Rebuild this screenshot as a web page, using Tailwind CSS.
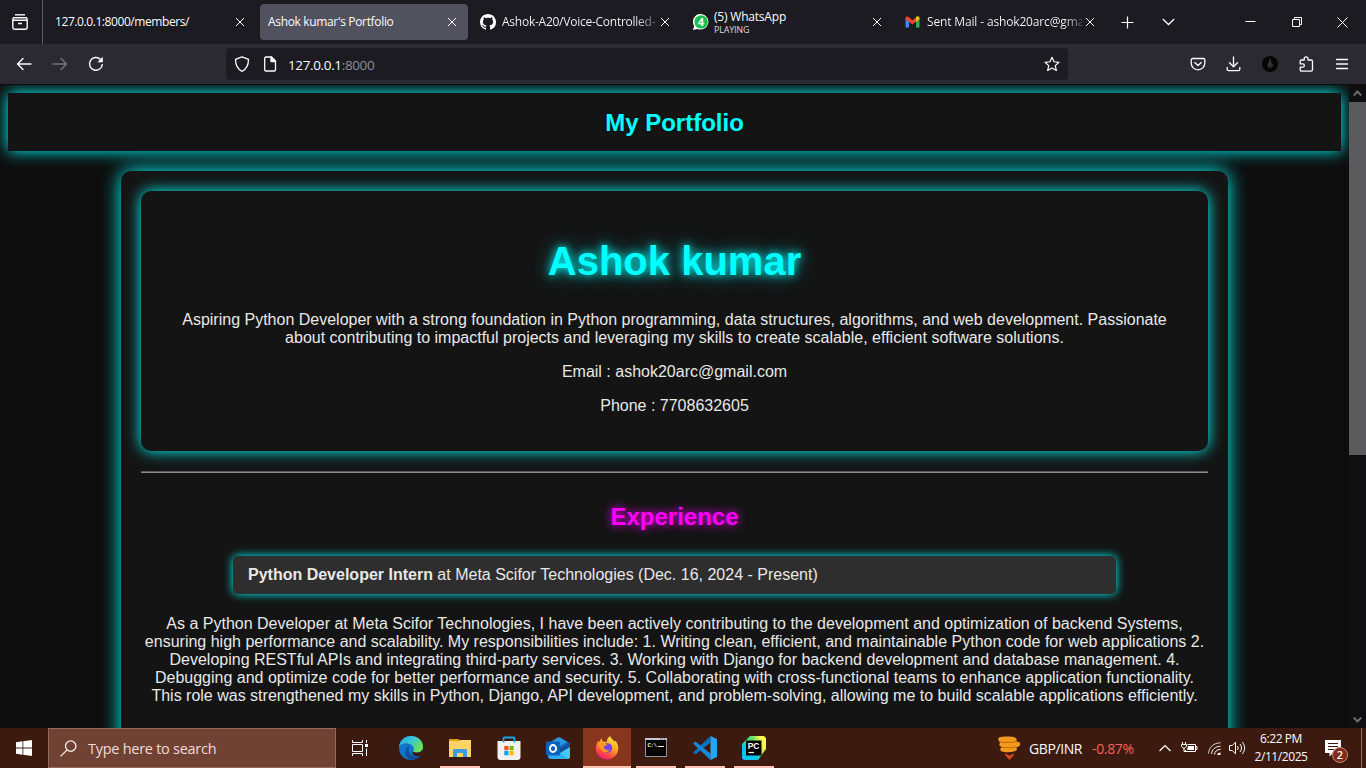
<!DOCTYPE html>
<html lang="en">
<head>
<meta charset="utf-8">
<title>Ashok kumar's Portfolio</title>
<script src="https://cdn.jsdelivr.net/npm/@tailwindcss/browser@4"></script>
</head>
<body class="w-[1366px] h-[768px] overflow-hidden flex flex-col bg-[#0d0d0d] font-['Open_Sans',sans-serif] text-[#fbfbfe]">

<!-- Tab strip -->
<div class="h-11 shrink-0 flex bg-[#1c1b22] text-[12px] leading-4">
  <div class="w-[43px] shrink-0 border-r border-[#5b5a60] flex items-center pl-3">
    <svg width="16" height="16" viewBox="0 0 16 16" fill="none" stroke="#fbfbfe" stroke-width="1.4"><path d="M3 .8h10"/><path d="M1 3.700h14" stroke-width="1.2"/><path d="M.8 6.200h14.400v7c0 1.200-.8 2-2 2H2.800c-1.200 0-2-.8-2-2V5.500c0-1.200.8-1.900 2-1.900h10.400c1.200 0 2 .7 2 1.900v1"/><path d="M6 9.500h4" stroke-width="1.5"/></svg>
  </div>
  <div class="w-[215px] shrink-0 flex items-center pl-3">
    <span class="w-[180px] whitespace-nowrap tracking-[-0.42px]">127.0.0.1:8000/members/</span>
    <svg width="10" height="10" viewBox="0 0 10 10" stroke="#fbfbfe" stroke-width="1"><path d="M1 1l8 8M9 1l-8 8"/></svg>
  </div>
  <div class="mt-1 h-9 w-[208px] ml-0.5 shrink-0 rounded bg-[#52525e] flex items-center pl-2">
    <span class="w-[179px] whitespace-nowrap tracking-[-0.34px]">Ashok kumar's Portfolio</span>
    <svg width="10" height="10" viewBox="0 0 10 10" stroke="#fbfbfe" stroke-width="1"><path d="M1 1l8 8M9 1l-8 8"/></svg>
  </div>
  <div class="w-[213px] shrink-0 flex items-center pl-3">
    <svg width="16" height="16" viewBox="0 0 16 16" fill="#fff"><path d="M8 0C3.58 0 0 3.58 0 8c0 3.54 2.29 6.53 5.47 7.59.4.07.55-.17.55-.38 0-.19-.01-.82-.01-1.49-2.01.37-2.53-.49-2.69-.94-.09-.23-.48-.94-.82-1.13-.28-.15-.68-.52-.01-.53.63-.01 1.08.58 1.23.82.72 1.21 1.87.87 2.33.66.07-.52.28-.87.51-1.07-1.78-.2-3.64-.89-3.64-3.95 0-.87.31-1.59.82-2.15-.08-.2-.36-1.02.08-2.12 0 0 .67-.21 2.2.82.64-.18 1.32-.27 2-.27s1.36.09 2 .27c1.53-1.04 2.2-.82 2.2-.82.44 1.1.16 1.92.08 2.12.51.56.82 1.27.82 2.15 0 3.07-1.87 3.75-3.65 3.95.29.25.54.73.54 1.48 0 1.07-.01 1.93-.01 2.2 0 .21.15.46.55.38A8.01 8.01 0 0 0 16 8c0-4.42-3.58-8-8-8z"/></svg>
    <span class="ml-[6px] w-[156px] mr-[2px] whitespace-nowrap tracking-[-0.25px] bg-linear-to-r from-[#fbfbfe] from-85% to-[#fbfbfe]/20 bg-clip-text text-transparent">Ashok-A20/Voice-Controlled-</span>
    <svg width="10" height="10" viewBox="0 0 10 10" stroke="#fbfbfe" stroke-width="1"><path d="M1 1l8 8M9 1l-8 8"/></svg>
  </div>
  <div class="w-[212px] shrink-0 flex items-center pl-3">
    <svg width="16" height="16" viewBox="0 0 16 16"><path d="M8.2 0A7.8 7.8 0 1 1 4.4 14.9L0 16l1.200-4A7.800 7.800 0 0 1 8.200 0z" fill="#fff"/><circle cx="8.100" cy="7.900" r="6.700" fill="#18c148"/><text x="8" y="11.600" text-anchor="middle" font-size="10.500" font-weight="700" fill="#fff" font-family="Open Sans">4</text></svg>
    <div class="ml-[5px] w-[158px] whitespace-nowrap">
      <div class="tracking-[-0.2px] leading-[15px]">(5) WhatsApp</div>
      <div class="text-[9px] leading-[12px] tracking-[-0.2px] text-[#d8d8dc]">PLAYING</div>
    </div>
    <svg width="10" height="10" viewBox="0 0 10 10" stroke="#fbfbfe" stroke-width="1"><path d="M1 1l8 8M9 1l-8 8"/></svg>
  </div>
  <div class="w-[214px] shrink-0 flex items-center pl-3">
    <svg width="15" height="12" viewBox="0 0 15 12"><path d="M.5 2v9.500H4V5z" fill="#4285f4"/><path d="M14.500 2v9.500H11V5z" fill="#34a853"/><path d="M.5 2.200C.5.4 2.200 0 3.200.8L7.500 4.200 11.200 1.200V5.600L7.500 8.400.5 3.500z" fill="#ea4335"/><path d="M11 1l.8-.5c1.200-.8 2.700 0 2.700 1.500v1.300L11 5.700z" fill="#fbbc04"/></svg>
    <span class="ml-[7px] w-[155px] mr-[3px] whitespace-nowrap tracking-[-0.15px] bg-linear-to-r from-[#fbfbfe] from-88% to-[#fbfbfe]/25 bg-clip-text text-transparent">Sent Mail - ashok20arc@gma</span>
    <svg width="10" height="10" viewBox="0 0 10 10" stroke="#fbfbfe" stroke-width="1"><path d="M1 1l8 8M9 1l-8 8"/></svg>
  </div>
  <div class="flex-1 flex items-center pl-[14px]">
    <svg width="13" height="13" viewBox="0 0 13 13" stroke="#fbfbfe" stroke-width="1.200"><path d="M6.500.5v12M.5 6.500h12"/></svg>
    <svg class="ml-7" width="13" height="8" viewBox="0 0 13 8" fill="none" stroke="#fbfbfe" stroke-width="1.300"><path d="M.8 1l5.700 5.500L12.200 1"/></svg>
    <svg class="ml-[70px]" width="11" height="10" viewBox="0 0 11 10" stroke="#fff"><path d="M.5 4.500h10"/></svg>
    <svg class="ml-9" width="10" height="10" viewBox="0 0 10 10" fill="none" stroke="#fff"><path d="M.5 2.500h7v7h-7zM2.500 2.500v-2h7v7h-2"/></svg>
    <svg class="ml-[35px]" width="11" height="11" viewBox="0 0 11 11" stroke="#fff"><path d="M.5.5l10 10M10.500.5l-10 10"/></svg>
  </div>
</div>

<!-- Toolbar -->
<div class="h-[41px] shrink-0 flex items-center bg-[#2b2a33] border-b border-[#0c0c0d]">
  <svg class="ml-4" width="16" height="16" viewBox="0 0 16 16" fill="none" stroke="#fbfbfe" stroke-width="1.400" stroke-linecap="round" stroke-linejoin="round"><path d="M15 8H1.500M7 2.500L1.500 8 7 13.500"/></svg>
  <svg class="ml-5" width="16" height="16" viewBox="0 0 16 16" fill="none" stroke="#77767d" stroke-width="1.400" stroke-linecap="round" stroke-linejoin="round"><path d="M1 8h13.500M9 2.500L14.500 8 9 13.500"/></svg>
  <svg class="ml-5" width="16" height="16" viewBox="0 0 16 16" fill="none" stroke="#fbfbfe" stroke-width="1.400"><path d="M12.500 3.400A6.400 6.400 0 1 0 14.300 8"/><path d="M14.800 .8v5.400H9.400z" fill="#fbfbfe" stroke="none"/></svg>
  <div class="ml-[122px] w-[842px] h-8 rounded bg-[#1c1b22] flex items-center pl-2 text-[13.5px] leading-5">
    <svg width="16" height="16" viewBox="0 0 16 16" fill="none" stroke="#fbfbfe" stroke-width="1.300" stroke-linejoin="round"><path d="M8 .8l6.500 2.500c0 5.500-1.700 9.700-6.500 12-4.800-2.300-6.500-6.500-6.500-12z"/></svg>
    <svg class="ml-3" width="16" height="16" viewBox="0 0 16 16" fill="none" stroke="#fbfbfe" stroke-width="1.300" stroke-linejoin="round"><path d="M2.700 2.300c0-.8.500-1.300 1.300-1.300h5.500l4 4v8.700c0 .8-.5 1.300-1.300 1.300H4c-.8 0-1.300-.5-1.300-1.300z"/><path d="M9 1v4.500h4.500z" fill="#fbfbfe"/></svg>
    <span class="ml-[10px] mt-px tracking-[-0.36px] whitespace-nowrap">127.0.0.1<span class="text-[#8f8f96]">:8000</span></span>
    <svg class="ml-auto mr-2" width="16" height="16" viewBox="0 0 17 16" fill="none" stroke="#fbfbfe" stroke-width="1.300" stroke-linejoin="round"><path d="M8.500 .9l2.200 4.700 5.200.6-3.900 3.500 1.100 5.300-4.600-2.700L3.900 15 5 9.700 1.100 6.200l5.200-.6z"/></svg>
  </div>
  <svg class="ml-[122px]" width="16" height="16" viewBox="0 0 16 16" fill="none" stroke="#fbfbfe" stroke-width="1.300" stroke-linecap="round" stroke-linejoin="round"><path d="M2.700 2.500h10.600c.9 0 1.500.6 1.500 1.500v3.300a6.800 6.500 0 0 1-13.600 0V4c0-.9.600-1.500 1.500-1.500z"/><path d="M4.800 6.500L8 9.500l3.200-3"/></svg>
  <svg class="ml-5" width="16" height="16" viewBox="0 0 16 16" fill="none" stroke="#fbfbfe" stroke-width="1.300" stroke-linecap="round" stroke-linejoin="round"><path d="M7.500 1v9.500M3.500 6.800l4 3.900 4-3.900M1.200 11.500v1.800c0 .8.500 1.300 1.300 1.300h10c.8 0 1.300-.5 1.300-1.300v-1.800"/></svg>
  <svg class="ml-5" width="16" height="16" viewBox="0 0 16 16"><circle cx="8" cy="8" r="8" fill="#060606"/><path d="M7.500 2.500l1.500 1 .3 3 1.700 2-.3 3-1-1.500-.3 3.500-1.200-3-1.600 3-.3-3.500-1.300 1 .6-3.500 1.200-1z" fill="#333232"/></svg>
  <svg class="ml-5" width="16" height="16" viewBox="0 0 16 16" fill="none" stroke="#fbfbfe" stroke-width="1.300" stroke-linejoin="round"><path d="M6.200 4V2.700a1.900 1.900 0 0 1 3.800 0V4h3.200c.8 0 1.300.5 1.300 1.300v8.500c0 .8-.5 1.300-1.300 1.300H3.500c-.8 0-1.300-.5-1.300-1.300v-2.600h2.500a1.600 1.600 0 0 0 0-3.300H2.200V5.300C2.200 4.500 2.700 4 3.500 4z"/></svg>
  <svg class="ml-5" width="16" height="16" viewBox="0 0 16 16" stroke="#fbfbfe" stroke-width="1.300" stroke-linecap="round"><path d="M2.500 3.500h11M2.500 8h11M2.500 12.500h11"/></svg>
</div>

<!-- Page viewport -->
<div class="h-[643px] shrink-0 flex overflow-hidden">
  <main class="w-[1349px] h-full overflow-hidden p-2 bg-[#0d0d0d] font-['Liberation_Sans',Arial,sans-serif] text-base leading-[18px] text-[#e8e8e8] text-center">
    <header class="h-[58px] pt-0.5 bg-[#141414] shadow-[0_0_15px_#00ffff] flex items-center justify-center text-[#00ffff] text-2xl font-bold">My Portfolio</header>
    <div class="mt-5 mx-[113px] h-[900px] rounded-[10px] bg-[#141414] shadow-[0_0_20px_#00ffff] p-5">
      <section class="h-[260px] rounded-[10px] bg-[#141414] shadow-[0_0_15px_#00ffff] pt-[47px]">
        <h1 class="text-[40px] leading-[46px] font-bold text-[#00ffff] [text-shadow:0_0_10px_#00ffff,0_0_20px_#00ffff80]">Ashok kumar</h1>
        <p class="mt-[27px] whitespace-nowrap">Aspiring Python Developer with a strong foundation in Python programming, data structures, algorithms, and web development. Passionate<br>about contributing to impactful projects and leveraging my skills to create scalable, efficient software solutions.</p>
        <p class="mt-4">Email : ashok20arc@gmail.com</p>
        <p class="mt-4">Phone : 7708632605</p>
      </section>
      <hr class="mt-5 h-0.5 border-t border-b border-t-[#58585a] border-b-[#8a8a8a]">
      <h2 class="mt-[30px] text-2xl leading-7 font-bold text-[#ff00ff] [text-shadow:0_0_10px_#ff00ff]">Experience</h2>
      <div class="mt-[25px] mx-[92px] h-[38px] rounded-[5px] bg-[#2e2e2e] shadow-[0_0_10px_#00ffff] flex items-center pl-[15px] whitespace-pre"><b>Python Developer Intern</b> at Meta Scifor Technologies (Dec. 16, 2024 - Present)</div>
      <p class="mt-[21px] whitespace-nowrap">As a Python Developer at Meta Scifor Technologies, I have been actively contributing to the development and optimization of backend Systems,<br>ensuring high performance and scalability. My responsibilities include: 1. Writing clean, efficient, and maintainable Python code for web applications 2.<br>Developing RESTful APIs and integrating third-party services. 3. Working with Django for backend development and database management. 4.<br>Debugging and optimize code for better performance and security. 5. Collaborating with cross-functional teams to enhance application functionality.<br>This role was strengthened my skills in Python, Django, API development, and problem-solving, allowing me to build scalable applications efficiently.</p>
    </div>
  </main>
  <div class="w-[17px] h-full bg-[#0f0f12] flex flex-col items-center">
    <div class="h-[17px] flex items-center"><svg width="9" height="7" viewBox="0 0 9 7" fill="none" stroke="#6a6a6c" stroke-width="2"><path d="M.7 5.500l3.800-4 3.800 4"/></svg></div>
    <div class="w-full h-[353px] bg-[#5b5b5d]"></div>
    <div class="mt-auto h-[17px] flex items-center"><svg width="9" height="7" viewBox="0 0 9 7" fill="none" stroke="#6a6a6c" stroke-width="2"><path d="M.7 1.500l3.800 4 3.800-4"/></svg></div>
  </div>
</div>

<!-- Taskbar -->
<div class="h-10 shrink-0 flex bg-[#3c1a10] whitespace-nowrap">
  <div class="w-12 flex items-center justify-center"><svg width="16" height="16" viewBox="0 0 16 16" fill="#fff"><path d="M0 2.200L6.500 1.300v6.300H0zM7.300 1.200L16 0v7.600H7.300zM0 8.400h6.500v6.300L0 13.800zM7.300 8.400H16V16l-8.700-1.200z"/></svg></div>
  <div class="w-72 border border-[#906a5d] bg-[#704234] flex items-center pl-[11px]">
    <svg width="17" height="17" viewBox="0 0 17 17" fill="none" stroke="#fbeeea" stroke-width="1.300"><circle cx="10.700" cy="6.100" r="5.200"/><path d="M7 9.900L.6 16.400"/></svg>
    <span class="ml-[11px] mt-0.5 text-[14.500px] tracking-[-0.27px] text-[#f0dcd6]">Type here to search</span>
  </div>
  <div class="w-12 mr-[3px] flex items-center justify-center"><svg width="17" height="16" viewBox="0 0 17 16" fill="none" stroke="#fff"><path d="M.5 0v2.500h10V0M.5 16v-2.500h10V16M.5 4.500h10v7H.5zM14.500 0v3M14.500 8.500V16"/><path d="M13 4h3v3h-3z" fill="#fff" stroke="none"/></svg></div>
  <div class="flex gap-px">
    <div class="w-12 flex items-center justify-center">
      <svg width="24" height="24" viewBox="0 0 24 24"><defs><linearGradient id="eg" x1="0" y1="0" x2="1" y2=".5"><stop offset="0" stop-color="#2aa7e8"/><stop offset=".5" stop-color="#35c5d8"/><stop offset="1" stop-color="#6be05a"/></linearGradient></defs><circle cx="12" cy="12" r="12" fill="#1174cc"/><path d="M0 11C.8 4.500 5.500 0 12 0c7 0 12 5 12 10.500 0 4-3 6-6 6-2.800 0-4.300-1-3.800-1.800 1.200-1.600.8-3.500-.5-4.800C10 6 2 6.500 0 11z" fill="url(#eg)"/><path d="M9.500 12c-1 5 3.500 8.500 8 8.500 2 0 3.600-.6 4.800-1.400C20.300 22 16.500 24 12.500 24 7.500 23.500 5 18 6.500 14.500 7.500 12 9 10.500 11 9.500c-.8.600-1.300 1.500-1.500 2.500z" fill="#0f4f9c"/><path d="M18 16.600c2.500 0 4.600-1.200 5.500-3.200.6 2-.1 4-1.200 5.500-1.800 1.600-6 1.900-8-.1-1-1-1.200-2.600-.4-3.400.6.700 2 1.200 4.100 1.200z" fill="#3c1a10"/></svg>
    </div>
    <div class="w-12 flex flex-col items-center">
      <svg class="mt-2" width="22" height="24" viewBox="0 0 22 24"><path d="M0 3h9.500l1.500 2H0z" fill="#e0a010"/><path d="M0 5h10l1-1h11v17H0z" fill="#fcd364"/><path d="M4 14.500c0-.8.500-1.500 1.500-1.500h11c1 0 1.500.7 1.500 1.500V21h-4v-4H8v4H4z" fill="#3a9be0"/></svg>
      <div class="mt-auto w-10 h-0.5 bg-[#fcc3b3]"></div>
    </div>
    <div class="w-12 flex items-center justify-center">
      <svg width="24" height="24" viewBox="0 0 24 24"><path d="M6.500 6V2.300c0-.5.300-.8.800-.8h9.400c.5 0 .8.300.8.800V6" fill="none" stroke="#1ba1e6" stroke-width="1.800"/><path d="M.5 5h23v16a3 3 0 0 1-3 3h-17a3 3 0 0 1-3-3z" fill="#f1f1f1"/><path d="M6.500 5v1.500M17.500 5v1.500" stroke="#1ba1e6" stroke-width="1.800"/><path d="M7.300 10h4.200v4.200H7.300z" fill="#f25022"/><path d="M12.500 10h4.200v4.200h-4.200z" fill="#7fba00"/><path d="M7.300 15h4.200v4.200H7.300z" fill="#00a4ef"/><path d="M12.500 15h4.200v4.200h-4.200z" fill="#ffb900"/></svg>
    </div>
    <div class="w-12 flex items-center justify-center">
      <svg width="24" height="24" viewBox="0 0 24 24"><path d="M2 7.500L12 1.500q1-.6 2 0l10 6v12H2z" fill="#1a6fc4"/><path d="M12 1.500q1-.6 2 0l7 4.200L10 12 3 7z" fill="#2c93e0"/><path d="M13 13.500L24 7v14a2 2 0 0 1-2 2H6z" fill="#45c8f5"/><path d="M13 12.500L24 6v5l-10 6z" fill="#0f4f9c"/><path d="M2 17l11-1 9 7H5a3 3 0 0 1-3-3z" fill="#2fb0ee"/><rect y="5.500" width="14" height="14" rx="1.500" fill="#0a62be"/><ellipse cx="7" cy="12.500" rx="3.100" ry="3.500" fill="none" stroke="#fff" stroke-width="1.900"/></svg>
    </div>
    <div class="w-12 flex flex-col items-center bg-[#87351d]">
      <svg class="mt-2" width="24" height="24" viewBox="0 0 24 24"><defs><linearGradient id="fg" x1=".8" y1="0" x2=".3" y2="1"><stop offset="0" stop-color="#fff04a"/><stop offset=".45" stop-color="#ffa024"/><stop offset=".8" stop-color="#ff4048"/><stop offset="1" stop-color="#f0148c"/></linearGradient></defs><path d="M15 0c1 2.500 3.200 3.500 4.500 5.500l.8-.7C22.500 7 23.300 9.500 23.300 12.500 23.300 18.500 18.300 23.500 12.300 23.500S.8 19 .8 12.800C.8 9 2.300 6.300 3.500 4.500l.7 2L6.500 2l1 3.500c2 0 3 .3 4 1C11.800 3.500 13 1.500 15 0z" fill="url(#fg)"/><circle cx="12.300" cy="12" r="4.800" fill="#7542e5"/><path d="M3.500 8.500c2.500-2 6.500-1.300 9 .3-1 1.200-3.500 1-3.800 2.300.3 2.800 3.800 3.700 6.300 2.500-1.500 3.300-7 3.700-8.800.4C4.700 12.500 4 10.500 3.500 8.500z" fill="#ff9428"/></svg>
      <div class="mt-auto w-12 h-0.5 bg-[#fcc3b3]"></div>
    </div>
    <div class="w-12 flex flex-col items-center">
      <svg class="mt-[10px] -ml-px" width="22" height="19" viewBox="0 0 22 19"><path d="M0 0h22v19H0z" fill="#8f949c"/><path d="M0 0h22v2H0z" fill="#c3c8d2"/><path d="M1 2h20v16H1z" fill="#050505"/><path d="M15 1h5" stroke="#556" stroke-dasharray="1 1"/><text x="2.500" y="8.500" font-family="Liberation Mono" font-size="6" font-weight="700" fill="#eee" textLength="9.500">C:\</text><path d="M13 8.500h6" stroke="#eee"/></svg>
      <div class="mt-auto w-10 h-0.5 bg-[#fcc3b3]"></div>
    </div>
    <div class="w-12 flex flex-col items-center">
      <svg class="mt-2" width="24" height="24" viewBox="0 0 24 24"><path d="M17.500 0v6.500L2.500 18.500 0 16.500z" fill="#0a6fbd"/><path d="M17.500 24v-6.500L2.500 5.500 0 7.500z" fill="#1889d4"/><path d="M17.500 0L24 3v18l-6.500 3z" fill="#27a5f2"/></svg>
      <div class="mt-auto w-10 h-0.5 bg-[#fcc3b3]"></div>
    </div>
    <div class="w-12 flex flex-col items-center">
      <svg class="mt-2" width="24" height="24" viewBox="0 0 24 24"><defs><linearGradient id="pg" x1="0" y1=".5" x2="1" y2=".1"><stop offset=".15" stop-color="#21d7a0"/><stop offset=".5" stop-color="#5fe06a"/><stop offset=".8" stop-color="#fcf84a"/></linearGradient></defs><path d="M8 0h14l2 2v11l-8 11H2l-2-2V8z" fill="url(#pg)"/><path d="M0 11l4-4 15 12-4 5H2l-2-2z" fill="#07c3f2"/><path d="M4 4.500h15.500V19.500H4z" fill="#000"/><text x="5.800" y="12.500" font-family="Liberation Sans" font-size="8.500" font-weight="700" fill="#fff" textLength="11.500">PC</text><path d="M6.500 16.500H12" stroke="#fff" stroke-width="1.200"/></svg>
      <div class="mt-auto w-10 h-0.5 bg-[#fcc3b3]"></div>
    </div>
  </div>
  <div class="ml-auto flex items-center w-[368px]">
    <svg class="mt-0.5" width="24" height="26" viewBox="0 0 24 26"><path d="M1 1.500C5 .3 14 .3 17 1.500c2 1 2 3 1 4 3 0 5 1 4 3.500-.7 2-3 2-4 2 2 1.500.7 4-2 4.500-4 1-9 1-12 0-2.500-1-2-3.500 0-4.500-3-.5-3.500-3-1.500-4.500C.5 5.500-.5 3 1 1.500z" fill="#f39a1e"/><path d="M1.500 5.500c5 1.200 11 1 16.500 0M3.500 11c5 1 10 .9 14.500 0" stroke="#c86d08" stroke-width="1.100" fill="none"/><path d="M7 17.500l4.500 2 4.500-2v1.500l-4.500 5L7 19z" fill="#d9481c"/></svg>
    <span class="ml-[7px] w-[63px] text-[14px] tracking-[-0.4px]">GBP/INR</span>
    <span class="w-[67px] text-[14px] tracking-[-0.35px] text-[#f4625c]">-0.87%</span>
    <svg width="12" height="8" viewBox="0 0 12 8" fill="none" stroke="#fff" stroke-width="1.200"><path d="M.5 7L6 1.500 11.500 7"/></svg>
    <svg class="ml-[10px]" width="17" height="12" viewBox="0 0 17 12" fill="none" stroke="#fff"><path d="M6.500 2.500h8v7h-10V8M14.500 4.500h1.500v3h-1.500"/><path d="M7 4h6v4H6z" fill="#fff" stroke="none"/><path d="M1.500 0v2M4.500 0v2M.5 2.500h5v2L3 6.500.500 4.500zM3 6v3.500h2"/></svg>
    <svg class="ml-[10px]" width="13" height="13" viewBox="0 0 13 13" fill="none" stroke="#fff"><path d="M.5 11.500C1 5 5.500 1 12.500 .8" opacity=".8"/><path d="M3.500 12C4 7.500 7 4.500 12.500 4.200M6.500 12.500c.2-3 2.500-5 6-5.200"/><path d="M9.200 13c0-1.500 1.300-2.600 3.300-2.600V13z" fill="#fff" stroke="none"/></svg>
    <svg class="ml-[8px]" width="17" height="14" viewBox="0 0 17 14" fill="none" stroke="#fff"><path d="M.5 4.500h2.700L6.500 1.200v11.600L3.200 9.500H.5zM8.500 5c.8 1.200.8 2.800 0 4M11 3c2 2.500 2 5.500 0 8M13.300 1c3 3.500 3 8.500 0 12"/></svg>
    <div class="ml-[2px] w-[66px] text-center text-[12px] leading-[18px] tracking-[-0.42px]"><div>6:22 PM</div><div>2/11/2025</div></div>
    <div class="relative ml-[11px] w-6 h-6">
      <svg width="24" height="24" viewBox="0 0 24 24"><path d="M0 4h16v13H8l-3.500 3.500V17H0z" fill="#fff"/><path d="M3 7.500h10M3 10.500h10M3 13.500h6" stroke="#3c1a10"/></svg>
      <span class="absolute left-[7px] top-[11px] size-4 rounded-full bg-[#7d2c17] border border-[#c78b7b] text-[11px] leading-[14px] font-semibold text-center">2</span>
    </div>
    <div class="ml-auto mr-1 w-px h-full bg-[#8c6e64]"></div>
  </div>
</div>
</body>
</html>
